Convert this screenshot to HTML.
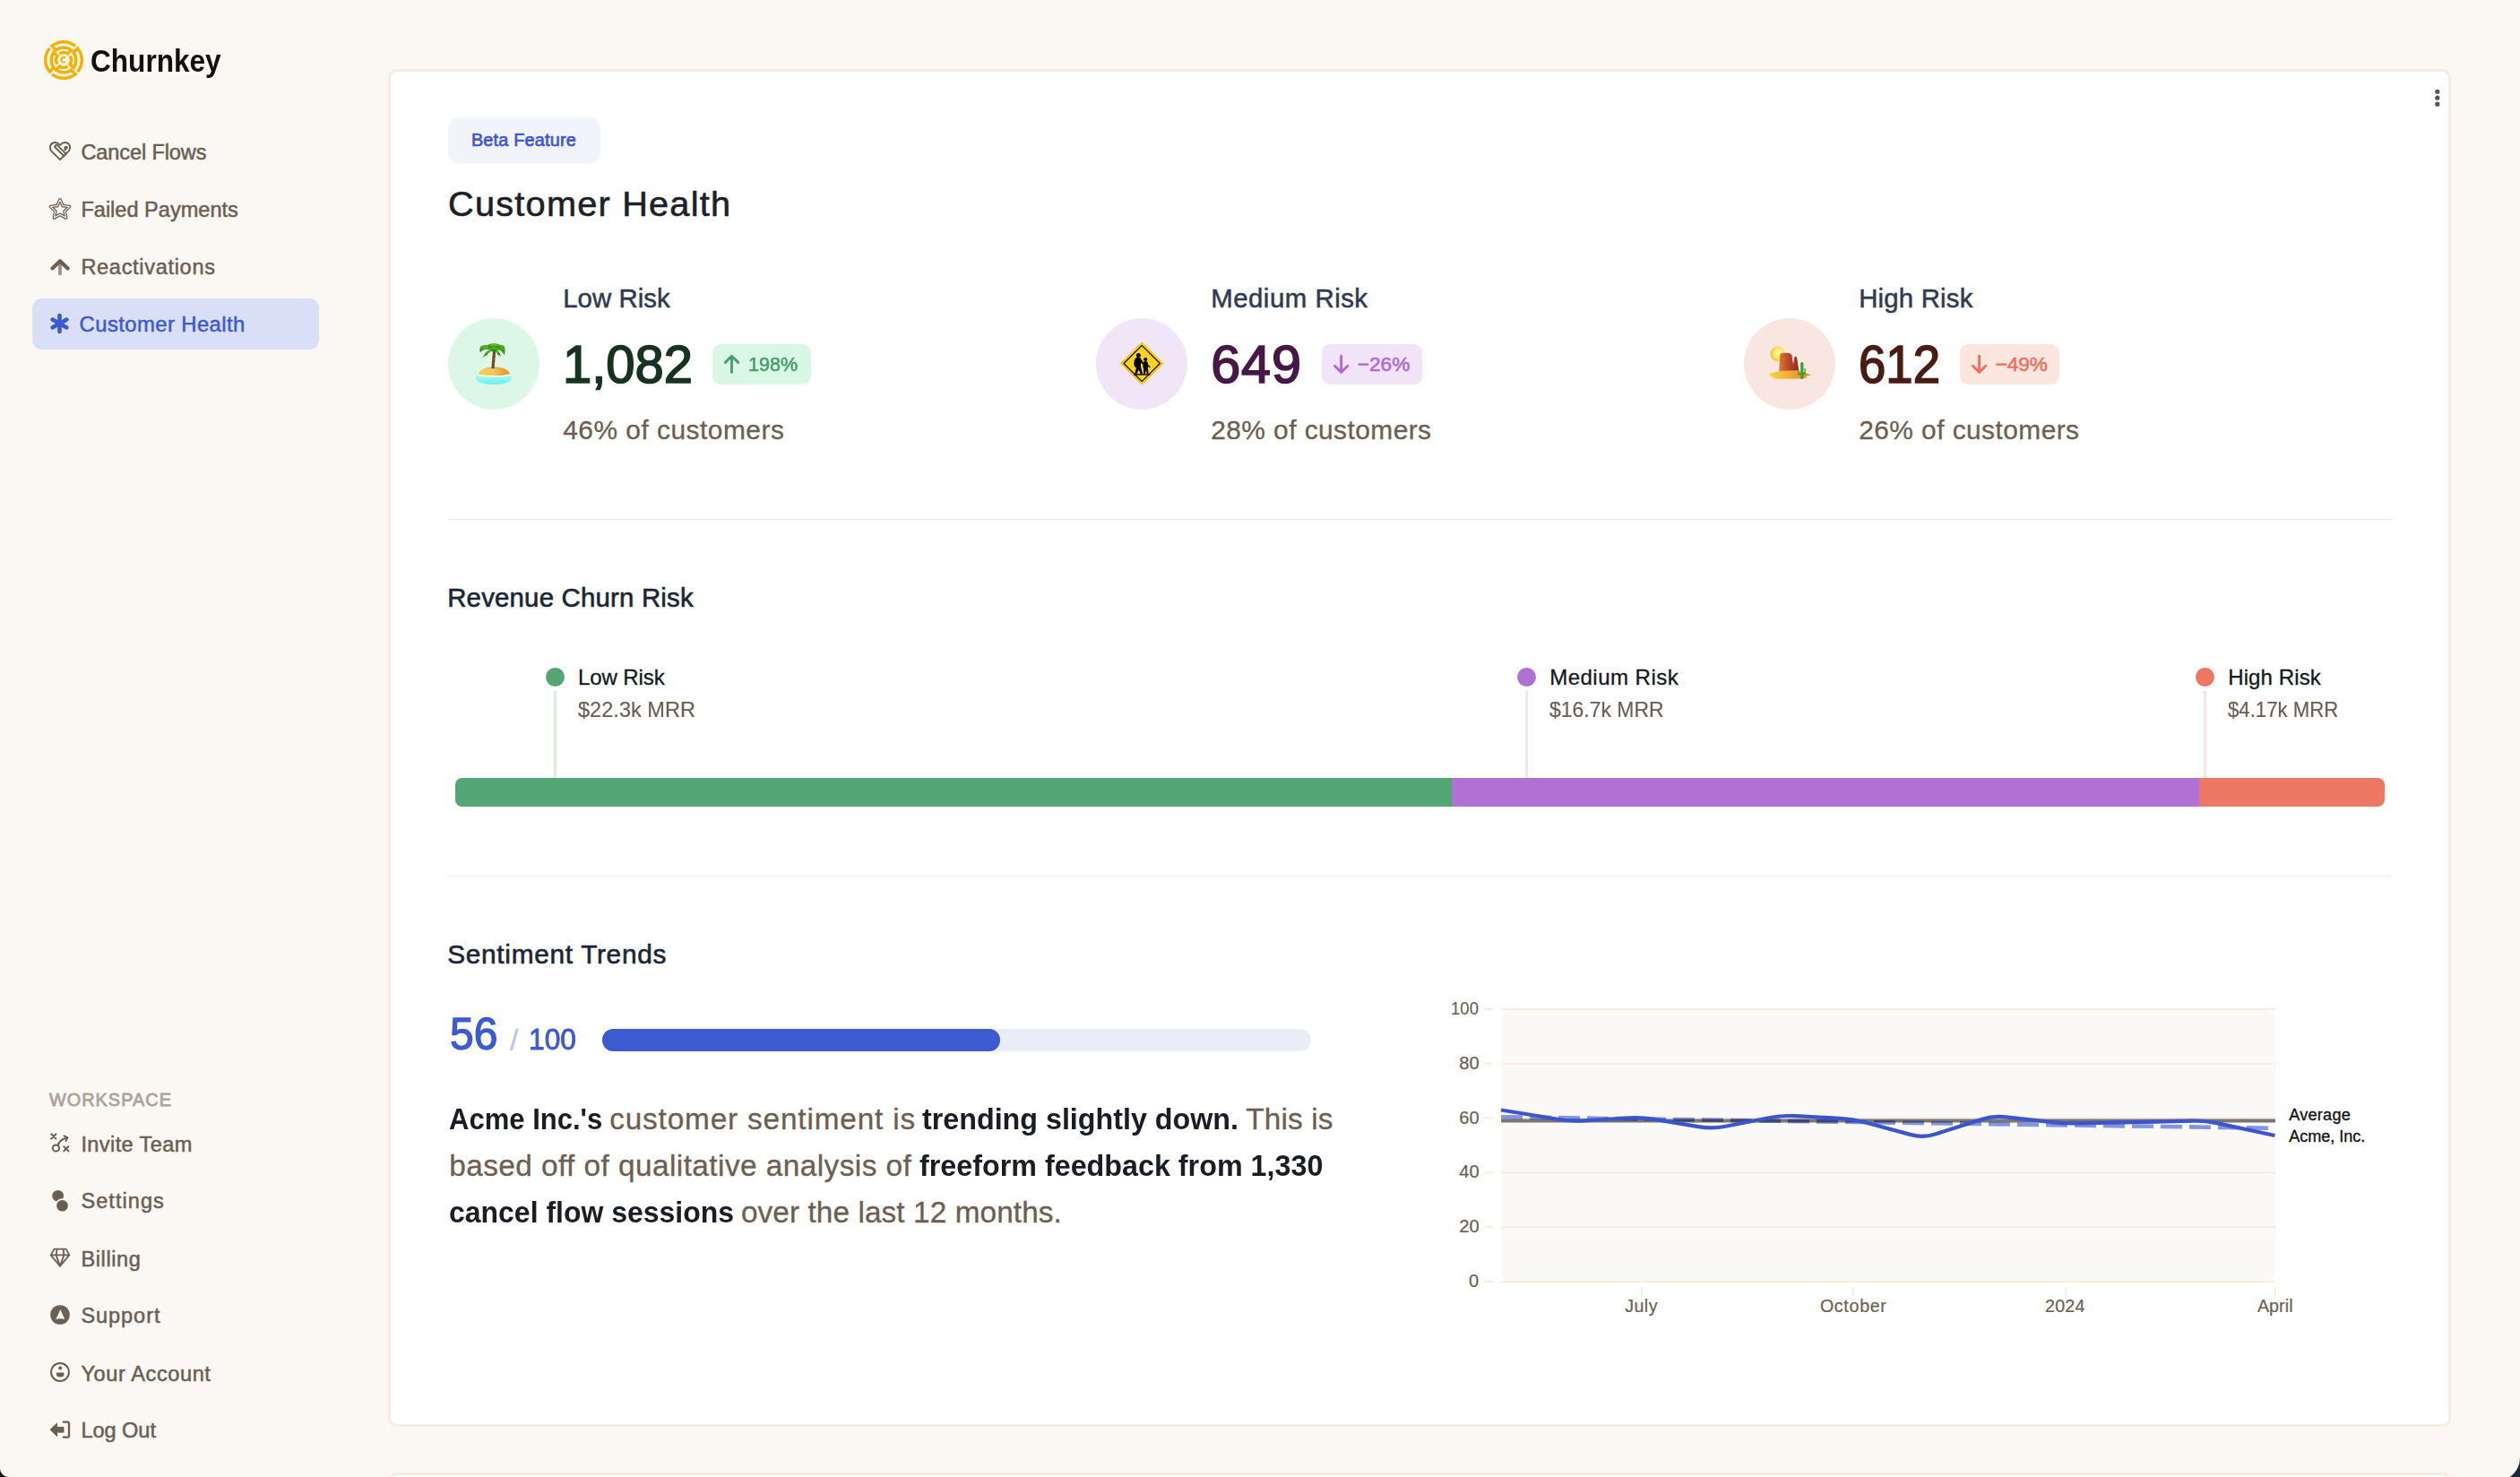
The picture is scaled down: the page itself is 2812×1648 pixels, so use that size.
<!DOCTYPE html>
<html><head><meta charset="utf-8"><title>Customer Health - Churnkey</title>
<style>
html,body{margin:0;padding:0}
body{width:2812px;height:1648px;overflow:hidden;background:#fbf7f2;position:relative;font-family:"Liberation Sans",sans-serif}
.t{position:absolute;white-space:nowrap;line-height:1;font-family:"Liberation Sans",sans-serif}
.a{position:absolute;box-sizing:border-box}
svg{position:absolute;overflow:visible}
</style></head>
<body>
<svg style="left:0;top:1628px" width="40" height="20" viewBox="0 1628 40 20"><path d="M0,1638.6 A9.4,9.4 0 0 0 9.4,1648 L0,1648 Z" fill="#111"/></svg>
<svg style="left:2772px;top:1620px" width="40" height="28" viewBox="2772 1620 40 28"><path d="M2812,1626.4 A26.3,26.3 0 0 1 2785.7,1652.7 L2812,1652.7 Z" fill="#1b2a38"/></svg>
<div class="a" style="left:433px;top:77px;width:2302px;height:1515px;background:#fff;border:3px solid #f7ece1;border-radius:10px"></div>
<div class="a" style="left:433px;top:1643px;width:2302px;height:40px;background:#fff;border:3px solid #f7ece1;border-radius:10px"></div>
<svg style="left:2710px;top:95px" width="20" height="30" viewBox="2710 95 20 30"><circle cx="2719.8" cy="102.3" r="2.6" fill="#55575c"/><circle cx="2719.8" cy="109.2" r="2.6" fill="#55575c"/><circle cx="2719.8" cy="116.2" r="2.6" fill="#55575c"/></svg>
<div class="a" style="left:36px;top:333px;width:320px;height:57px;background:#d9dff6;border-radius:11px"></div>
<div class="a" style="left:500px;top:131px;width:170px;height:51px;background:#f2f4fc;border-radius:12px"></div>
<svg style="left:46px;top:42px" width="50" height="50" viewBox="46 42 50 50"><g fill="none" stroke="#f5b000" stroke-width="3.5" stroke-linejoin="miter" stroke-linecap="butt"><path d="M84.05,51.45 A20.3,20.3 0 0 0 57.95,51.45 L62.63,55.90 A13.9,13.9 0 0 1 79.37,55.90 L75.70,60.04 A8.4,8.4 0 0 0 66.43,59.96"/><path d="M86.55,80.05 A20.3,20.3 0 0 0 86.55,53.95 L82.10,58.63 A13.9,13.9 0 0 1 82.10,75.37 L77.96,71.70 A8.4,8.4 0 0 0 78.04,62.43"/><path d="M57.95,82.55 A20.3,20.3 0 0 0 84.05,82.55 L79.37,78.10 A13.9,13.9 0 0 1 62.63,78.10 L66.30,73.96 A8.4,8.4 0 0 0 75.57,74.04"/><path d="M55.45,53.95 A20.3,20.3 0 0 0 55.45,80.05 L59.90,75.37 A13.9,13.9 0 0 1 59.90,58.63 L64.04,62.30 A8.4,8.4 0 0 0 63.96,71.57"/></g><path d="M72.91,64.79 A2.7,2.7 0 1 0 72.91,68.61" fill="none" stroke="#f5b000" stroke-width="2"/></svg>
<svg style="left:52px;top:154px" width="30" height="30" viewBox="52 154 30 30" fill="none" stroke="#6b5e52" stroke-width="1.9" stroke-linejoin="round">
<path d="M67,178.2 L57.6,168.8 Q55.2,166.2 56.2,162.6 Q57.6,159 61.6,159 Q64.6,159 67,161.8 Q69.4,159 72.4,159 Q76.4,159 77.8,162.6 Q78.8,166.2 76.4,168.8 Z"/>
<path d="M61.2,164 L71.4,174.2 L73.8,171.8 L63.6,161.6 Q61.6,161.4 61.2,164 Z"/>
<path d="M72.4,164.6 Q73.6,163 75,164.6 L72.6,167.4 Z" fill="#6b5e52"/>
</svg>
<svg style="left:52px;top:218px" width="30" height="30" viewBox="52 218 30 30" fill="none" stroke-linejoin="round">
<path d="M67.00,222.80 L70.17,229.63 L77.65,230.54 L72.14,235.67 L73.58,243.06 L67.00,239.40 L60.42,243.06 L61.86,235.67 L56.35,230.54 L63.83,229.63 Z" stroke="#6b5e52" stroke-width="3.6"/>
<path d="M67.00,222.80 L70.17,229.63 L77.65,230.54 L72.14,235.67 L73.58,243.06 L67.00,239.40 L60.42,243.06 L61.86,235.67 L56.35,230.54 L63.83,229.63 Z" stroke="#fbf7f2" stroke-width="1.1"/>
</svg>
<svg style="left:52px;top:282px" width="30" height="30" viewBox="52 282 30 30" fill="none" stroke-linecap="round" stroke-linejoin="round">
<path d="M67,295 L67,305.4" stroke="#9b9088" stroke-width="3.8"/>
<path d="M58.4,299.6 L67,291.2 L75.6,299.6" stroke="#6b5e52" stroke-width="4.2"/>
</svg>
<svg style="left:52px;top:346px" width="30" height="30" viewBox="52 346 30 30" stroke="#3c58cf" stroke-width="4.6" stroke-linecap="round">
<line x1="66.5" y1="352" x2="66.5" y2="370"/><line x1="58.6" y1="356.6" x2="74.4" y2="365.4"/><line x1="58.6" y1="365.4" x2="74.4" y2="356.6"/>
</svg>
<svg style="left:52px;top:1260px" width="30" height="30" viewBox="52 1260 30 30" fill="none" stroke="#6b5e52" stroke-width="2" stroke-linecap="round" stroke-linejoin="round">
<path d="M57.2,1265.4 L62.4,1270.6 M62.4,1265.4 L57.2,1270.6"/>
<path d="M71.2,1279.2 L76.4,1284.4 M76.4,1279.2 L71.2,1284.4"/>
<circle cx="62.4" cy="1281" r="3.6"/>
<path d="M64.6,1277.6 Q66.8,1271.4 75,1269.6"/>
<path d="M71.6,1267.4 L75.4,1269.4 L73.4,1273"/>
</svg>
<svg style="left:52px;top:1324px" width="30" height="30" viewBox="52 1324 30 30">
<defs><mask id="mset"><rect x="52" y="1324" width="30" height="30" fill="#fff"/><circle cx="69.5" cy="1345.3" r="8" fill="#000"/></mask></defs>
<circle cx="64.6" cy="1334.3" r="6.4" fill="#6b5e52" mask="url(#mset)"/>
<circle cx="69.5" cy="1345.3" r="6.3" fill="#6b5e52"/>
</svg>
<svg style="left:52px;top:1388px" width="30" height="30" viewBox="52 1388 30 30" fill="none" stroke="#6b5e52" stroke-width="1.8" stroke-linejoin="round">
<path d="M60.6,1393.6 L73.6,1393.6 L77.4,1400.4 L67,1412.6 L56.6,1400.4 Z"/>
<path d="M56.6,1400.4 L77.4,1400.4 M63.6,1393.6 L62.6,1400.4 L67,1412.6 L71.4,1400.4 L70.6,1393.6"/>
</svg>
<svg style="left:52px;top:1452px" width="30" height="30" viewBox="52 1452 30 30">
<circle cx="67" cy="1467" r="10.8" fill="#6b5e52"/>
<path d="M67.4,1461 L72.2,1472 Q67.2,1470.6 62.4,1472 Z" fill="#fbf7f2"/>
</svg>
<svg style="left:52px;top:1516px" width="30" height="30" viewBox="52 1516 30 30">
<circle cx="67" cy="1531" r="10" fill="none" stroke="#6b5e52" stroke-width="2"/>
<circle cx="67.2" cy="1526.6" r="2" fill="#6b5e52"/>
<path d="M63,1531.4 L71.4,1531.4 Q72.2,1536.6 67.2,1536.6 Q62.2,1536.6 63,1531.4 Z" fill="#6b5e52"/>
</svg>
<svg style="left:52px;top:1580px" width="30" height="30" viewBox="52 1580 30 30">
<path d="M56,1595.2 L63.6,1588 L63.6,1592.4 L71,1592.4 L71,1598.1 L63.6,1598.1 L63.6,1602.4 Z" fill="#6b5e52" stroke="#6b5e52" stroke-width="1" stroke-linejoin="round"/>
<path d="M70.8,1586.7 L75.2,1586.7 Q77,1586.7 77,1588.6 L77,1601.8 Q77,1603.6 75.2,1603.6 L70.8,1603.6" fill="none" stroke="#6b5e52" stroke-width="2.3" stroke-linecap="round"/>
</svg>
<div class="a" style="left:500px;top:355px;width:102px;height:102px;border-radius:51px;background:#dcf6e7"></div>
<div class="a" style="left:1223px;top:355px;width:102px;height:102px;border-radius:51px;background:#f1e5f8"></div>
<div class="a" style="left:1946px;top:355px;width:102px;height:102px;border-radius:51px;background:#fae6e1"></div>
<div class="a" style="left:795px;top:384px;width:110px;height:45px;background:#d9f7e5;border-radius:9px"></div>
<svg style="left:795px;top:384px" width="40" height="45" viewBox="795 384 40 45" fill="none" stroke="#4a9d6c" stroke-width="2.9" stroke-linecap="round" stroke-linejoin="round"><path d="M816.5,415.4 L816.5,397.4 M809.3,404.4 L816.5,397.2 L823.7,404.4"/></svg>
<div class="a" style="left:1475px;top:384px;width:112px;height:45px;background:#f1e4f8;border-radius:9px"></div>
<svg style="left:1475px;top:384px" width="40" height="45" viewBox="1475 384 40 45" fill="none" stroke="#b06ad4" stroke-width="2.9" stroke-linecap="round" stroke-linejoin="round"><path d="M1496.6,397.2 L1496.6,415.2 M1489.3999999999999,408.2 L1496.6,415.4 L1503.8,408.2"/></svg>
<div class="a" style="left:2187px;top:384px;width:111px;height:45px;background:#fbe5df;border-radius:9px"></div>
<svg style="left:2187px;top:384px" width="40" height="45" viewBox="2187 384 40 45" fill="none" stroke="#e8735d" stroke-width="2.9" stroke-linecap="round" stroke-linejoin="round"><path d="M2208.6,397.2 L2208.6,415.2 M2201.4,408.2 L2208.6,415.4 L2215.7999999999997,408.2"/></svg>
<svg style="left:526px;top:378px" width="50" height="56" viewBox="526 378 50 56">
<defs><linearGradient id="gw" x1="0" y1="0" x2="0" y2="1"><stop offset="0" stop-color="#d9fbf3"/><stop offset="0.7" stop-color="#7ef5f0"/><stop offset="1" stop-color="#62eef0"/></linearGradient>
<linearGradient id="gs" x1="0" y1="0" x2="1" y2="0"><stop offset="0" stop-color="#fbd234"/><stop offset="0.45" stop-color="#f3c56a"/><stop offset="0.7" stop-color="#eab23c"/><stop offset="1" stop-color="#e48a2c"/></linearGradient>
<linearGradient id="gl" x1="0" y1="0" x2="0" y2="1"><stop offset="0" stop-color="#5fb82c"/><stop offset="1" stop-color="#2f7d17"/></linearGradient></defs>
<ellipse cx="551" cy="421.8" rx="20.2" ry="7.2" fill="url(#gw)"/>
<path d="M534,418.4 Q535.5,409.6 551,409.2 Q566.5,409.6 569,417.4 Q560,419.6 551,419.2 Q542,419.4 534,418.4 Z" fill="url(#gs)"/>
<path d="M540,412 Q551,407.8 562,412 Q551,410 540,412 Z" fill="#c98a3a" opacity="0.6"/>
<path d="M533.6,418.6 Q542,419.8 551,419.6 Q560,420.4 569.4,417.8" fill="none" stroke="#fff" stroke-width="1.3"/>
<path d="M550,411 Q550.8,401 551.6,391.6" stroke="#6e4420" stroke-width="3.2" fill="none"/>
<path d="M550.4,406 L552,405.2 M550.6,401 L552.2,400.2 M550.8,396 L552.4,395.2" stroke="#b58448" stroke-width="0.9"/>
<g fill="url(#gl)">
<path d="M551,389.6 Q544,382 536,386.4 Q534.6,390 535.8,393.6 Q541,387.4 551,391.4 Z"/>
<path d="M551,389.6 Q558,382 563,386.6 Q564.4,391.6 563,396.4 Q559,388.4 551,391.4 Z"/>
<path d="M550.6,390.2 Q542,388.6 538.8,399.6 Q541.6,396 543.4,396.6 Q545.4,391.6 551,392 Z"/>
<path d="M551.4,390.2 Q558,389.8 558.6,398.2 Q556.6,395.6 555.2,396 Q554.4,392 551,392 Z"/>
<path d="M540.4,386.8 Q551,379.6 561.6,386.8 Q551,384.4 540.4,386.8 Z"/>
<path d="M545,384.2 Q551,382.2 557,384.2 L557.6,388.4 Q551,387 544.4,388.4 Z"/><ellipse cx="551" cy="389.6" rx="4" ry="2.6"/>
</g>
<g fill="#8fd34a" opacity="0.7"><path d="M546,385.6 Q551,383.4 556,385.8 Q551,385.2 546,385.6 Z"/><path d="M538.4,389.6 Q541.6,386.4 546.4,387.8 Q541.6,388 538.4,389.6 Z"/></g>
</svg>
<svg style="left:1248px;top:380px" width="52" height="52" viewBox="1248 380 52 52">
<path d="M1274.2,382.2 L1297.6,405.5 L1274.2,428.8 L1250.8,405.5 Z" fill="#ffd41f" stroke="#f6c400" stroke-width="1.2" stroke-linejoin="round"/>
<path d="M1274.2,385.4 L1294.4,405.5 L1274.2,425.6 L1254,405.5 Z" fill="none" stroke="#111" stroke-width="1.3" stroke-linejoin="round"/>
<g fill="#000">
<circle cx="1270.4" cy="396.4" r="2.5"/>
<path d="M1268,399 Q1271,398 1272.6,399.6 L1275.8,404.6 L1276.6,406.2 L1275.4,406.8 L1273.2,404.6 L1273,409.6 L1275.2,417.6 L1273,417.8 L1270.8,412.4 L1268.2,417.8 L1266,417.6 L1268,410.6 Q1265.2,409.6 1265.4,405 Q1265.6,400.6 1268,399 Z"/>
<circle cx="1278.2" cy="401" r="2.1"/>
<path d="M1276.2,403.4 Q1278.4,402.6 1280.4,403.8 L1281.6,407.6 L1283.8,409.4 L1283.2,410.2 L1280.8,409 L1281,411.4 L1281.6,417.6 L1280,417.6 L1278.8,413 L1277.8,417.6 L1276.2,417.6 L1276,411.6 Q1274.8,409.6 1275.4,406.4 Q1275.6,404.2 1276.2,403.4 Z"/>
<rect x="1265" y="417.2" width="18.4" height="1.4"/>
</g>
</svg>
<svg style="left:1970px;top:380px" width="56" height="50" viewBox="1970 380 56 50">
<defs><radialGradient id="gsun" cx="0.6" cy="0.45" r="0.6"><stop offset="0" stop-color="#fff6a8"/><stop offset="0.7" stop-color="#ffe15a"/><stop offset="1" stop-color="#f7b52c"/></radialGradient>
<linearGradient id="gsand" x1="0" y1="0" x2="1" y2="0"><stop offset="0" stop-color="#ffd63a"/><stop offset="0.6" stop-color="#f0a134"/><stop offset="1" stop-color="#e08a2a"/></linearGradient>
<linearGradient id="grock" x1="0" y1="0" x2="1" y2="0"><stop offset="0" stop-color="#e07a34"/><stop offset="0.5" stop-color="#b8452a"/><stop offset="1" stop-color="#8e2c22"/></linearGradient></defs>
<circle cx="1983.9" cy="394.9" r="8.4" fill="url(#gsun)"/>
<path d="M1985.2,414.4 L1986.2,395.4 Q1987.4,393.6 1990,393.8 L1995.6,394 Q1998.6,394.4 1999.4,396 L2001,406.8 L2002.6,398 Q2004.6,397.2 2005.2,399.4 L2007.2,413.6 Z" fill="url(#grock)"/>
<path d="M1973.6,417.6 Q1982,413.4 1996,413.4 Q2010,413.2 2020.8,418.4 Q2012,419.6 2016.4,421.6 Q2004,423.6 1992,422.4 Q1980,423.4 1978.4,421.2 Q1976,419.6 1973.6,417.6 Z" fill="url(#gsand)"/>
<g fill="#3aa032">
<rect x="2009.2" y="404" width="3.2" height="19" rx="1.6"/>
<path d="M2006.2,412.4 L2007.6,412.4 L2007.6,416.6 L2009.4,416.6 L2009.4,418.4 L2006.2,418.4 Z"/>
<path d="M2014.8,411 L2013.4,411 L2013.4,415.6 L2012,415.6 L2012,417.4 L2014.8,417.4 Z"/>
</g>
</svg>
<div class="a" style="left:500px;top:578.6px;width:2169px;height:1.4px;background:#f5e8dc"></div>
<div class="a" style="left:500px;top:977px;width:2169px;height:1.4px;background:#f5e8dc"></div>
<div class="a" style="left:508px;top:868px;width:2153px;height:32px;border-radius:8px;overflow:hidden;background:#ec7762"><div class="a" style="left:0;top:0;width:1112px;height:32px;background:#53a575"></div><div class="a" style="left:1112px;top:0;width:834px;height:32px;background:#b070d4"></div></div>
<div class="a" style="left:617.7px;top:771px;width:3px;height:97px;background:#dcefe3"></div>
<div class="a" style="left:608.8000000000001px;top:745.3px;width:20.8px;height:20.8px;border-radius:50%;background:#53a575"></div>
<div class="a" style="left:1702.2px;top:771px;width:3px;height:97px;background:#f1e2f7"></div>
<div class="a" style="left:1693.3px;top:745.3px;width:20.8px;height:20.8px;border-radius:50%;background:#b070d4"></div>
<div class="a" style="left:2458.9px;top:771px;width:3px;height:97px;background:#fbe2dc"></div>
<div class="a" style="left:2450.0px;top:745.3px;width:20.8px;height:20.8px;border-radius:50%;background:#ec7762"></div>
<div class="a" style="left:672px;top:1148px;width:791px;height:24.5px;border-radius:12.25px;background:#eaedf6"></div>
<div class="a" style="left:672px;top:1148px;width:444px;height:24.5px;border-radius:12.25px;background:#3d5bd0"></div>
<svg style="left:1600px;top:1100px" width="1000" height="380" viewBox="1600 1100 1000 380"><rect x="1675" y="1127" width="864" height="303" rx="12" fill="#fbf9f7"/><rect x="1656" y="1125" width="10" height="2" fill="#f7ebe2"/><rect x="1675" y="1125" width="864" height="2" fill="#f7ebe2"/><rect x="1656" y="1185.8" width="10" height="2" fill="#f7ebe2"/><rect x="1675" y="1185.8" width="864" height="2" fill="#f7ebe2"/><rect x="1656" y="1246.6" width="10" height="2" fill="#f7ebe2"/><rect x="1675" y="1246.6" width="864" height="2" fill="#f7ebe2"/><rect x="1656" y="1307.4" width="10" height="2" fill="#f7ebe2"/><rect x="1675" y="1307.4" width="864" height="2" fill="#f7ebe2"/><rect x="1656" y="1368.2" width="10" height="2" fill="#f7ebe2"/><rect x="1675" y="1368.2" width="864" height="2" fill="#f7ebe2"/><rect x="1656" y="1429" width="10" height="2" fill="#f7ebe2"/><rect x="1675" y="1429" width="864" height="2" fill="#f7ebe2"/><rect x="1831" y="1436" width="2" height="9.5" fill="#f7ebe2"/><rect x="2067" y="1436" width="2" height="9.5" fill="#f7ebe2"/><rect x="2304" y="1436" width="2" height="9.5" fill="#f7ebe2"/><rect x="2538" y="1436" width="2" height="9.5" fill="#f7ebe2"/><path d="M1675,1246.2 L2539,1258.8" stroke="#8394e0" stroke-width="4.6" stroke-dasharray="24 8" fill="none"/><path d="M1675,1250.6 L2539,1250.6" stroke="#000" stroke-opacity="0.52" stroke-width="4" fill="none"/><path d="M1675.00,1238.50 L1739.68,1248.96 Q1753.50,1251.20 1767.48,1250.38 L1818.02,1247.42 Q1832.00,1246.60 1845.81,1248.89 L1896.69,1257.31 Q1910.50,1259.60 1924.24,1256.94 L1975.26,1247.06 Q1989.00,1244.40 2002.98,1245.15 L2053.52,1247.85 Q2067.50,1248.60 2081.02,1252.25 L2132.48,1266.15 Q2146.00,1269.80 2159.34,1265.55 L2211.16,1249.05 Q2224.50,1244.80 2238.41,1246.36 L2289.09,1252.04 Q2303.00,1253.60 2317.00,1253.35 L2367.50,1252.45 Q2381.50,1252.20 2395.50,1251.84 L2446.00,1250.56 Q2460.00,1250.20 2473.69,1253.13 L2538.50,1267.00" stroke="#3d55cc" stroke-width="4.2" fill="none"/></svg>
<div class="t" style="left:101.40px;top:50.00px;font-size:35.17px;letter-spacing:0.000px;color:#111111;font-weight:700;transform:scaleX(0.8982);transform-origin:0 0;">Churnkey</div>
<div class="t" style="left:90.40px;top:159.00px;font-size:23.55px;letter-spacing:-0.109px;color:#6b5e52;-webkit-text-stroke:0.5px #6b5e52;">Cancel Flows</div>
<div class="t" style="left:90.40px;top:223.00px;font-size:23.55px;letter-spacing:0.007px;color:#6b5e52;-webkit-text-stroke:0.5px #6b5e52;">Failed Payments</div>
<div class="t" style="left:90.40px;top:287.00px;font-size:23.55px;letter-spacing:0.683px;color:#6b5e52;-webkit-text-stroke:0.5px #6b5e52;">Reactivations</div>
<div class="t" style="left:88.60px;top:350.00px;font-size:23.84px;letter-spacing:0.421px;color:#3c58cf;-webkit-text-stroke:0.5px #3c58cf;">Customer Health</div>
<div class="t" style="left:54.90px;top:1218.00px;font-size:19.85px;letter-spacing:1.057px;color:#aca39b;-webkit-text-stroke:0.8px #aca39b;">WORKSPACE</div>
<div class="t" style="left:90.40px;top:1266.00px;font-size:23.55px;letter-spacing:0.400px;color:#6b5e52;-webkit-text-stroke:0.5px #6b5e52;">Invite Team</div>
<div class="t" style="left:90.40px;top:1329.00px;font-size:23.55px;letter-spacing:1.057px;color:#6b5e52;-webkit-text-stroke:0.5px #6b5e52;">Settings</div>
<div class="t" style="left:90.40px;top:1394.00px;font-size:23.55px;letter-spacing:0.617px;color:#6b5e52;-webkit-text-stroke:0.5px #6b5e52;">Billing</div>
<div class="t" style="left:90.40px;top:1457.00px;font-size:23.55px;letter-spacing:0.933px;color:#6b5e52;-webkit-text-stroke:0.5px #6b5e52;">Support</div>
<div class="t" style="left:90.40px;top:1522.00px;font-size:23.55px;letter-spacing:0.600px;color:#6b5e52;-webkit-text-stroke:0.5px #6b5e52;">Your Account</div>
<div class="t" style="left:90.40px;top:1585.00px;font-size:23.55px;letter-spacing:-0.033px;color:#6b5e52;-webkit-text-stroke:0.5px #6b5e52;">Log Out</div>
<div class="t" style="left:525.90px;top:147.00px;font-size:19.83px;letter-spacing:0.204px;color:#3d58cf;-webkit-text-stroke:0.7px #3d58cf;">Beta Feature</div>
<div class="t" style="left:500.10px;top:208.00px;font-size:39.71px;letter-spacing:1.216px;color:#1d2027;-webkit-text-stroke:0.6px #1d2027;">Customer Health</div>
<div class="t" style="left:628.20px;top:318.00px;font-size:29.36px;letter-spacing:0.057px;color:#2f3a4e;-webkit-text-stroke:0.5px #2f3a4e;">Low Risk</div>
<div class="t" style="left:628.20px;top:377.00px;font-size:59.36px;letter-spacing:0.000px;color:#163322;-webkit-text-stroke:1.7px #163322;transform:scaleX(0.9763);transform-origin:0 0;">1,082</div>
<div class="t" style="left:628.20px;top:465.00px;font-size:29.88px;letter-spacing:0.504px;color:#6b5e52;-webkit-text-stroke:0.3px #6b5e52;">46% of customers</div>
<div class="t" style="left:834.90px;top:396.00px;font-size:22.56px;letter-spacing:0.000px;color:#4a9d6c;-webkit-text-stroke:0.6px #4a9d6c;transform:scaleX(0.9576);transform-origin:0 0;">198%</div>
<div class="t" style="left:1351.20px;top:318.00px;font-size:29.36px;letter-spacing:0.520px;color:#2f3a4e;-webkit-text-stroke:0.5px #2f3a4e;">Medium Risk</div>
<div class="t" style="left:1351.20px;top:377.00px;font-size:59.36px;letter-spacing:0.920px;color:#471746;-webkit-text-stroke:1.7px #471746;">649</div>
<div class="t" style="left:1351.20px;top:465.00px;font-size:29.88px;letter-spacing:0.451px;color:#6b5e52;-webkit-text-stroke:0.3px #6b5e52;">28% of customers</div>
<div class="t" style="left:1514.70px;top:396.00px;font-size:22.56px;letter-spacing:0.073px;color:#b06ad4;-webkit-text-stroke:0.6px #b06ad4;">−26%</div>
<div class="t" style="left:2074.20px;top:318.00px;font-size:29.36px;letter-spacing:0.187px;color:#2f3a4e;-webkit-text-stroke:0.5px #2f3a4e;">High Risk</div>
<div class="t" style="left:2074.20px;top:377.00px;font-size:59.36px;letter-spacing:0.000px;color:#4a1b12;-webkit-text-stroke:1.7px #4a1b12;transform:scaleX(0.9187);transform-origin:0 0;">612</div>
<div class="t" style="left:2074.20px;top:465.00px;font-size:29.88px;letter-spacing:0.451px;color:#6b5e52;-webkit-text-stroke:0.3px #6b5e52;">26% of customers</div>
<div class="t" style="left:2226.70px;top:396.00px;font-size:22.56px;letter-spacing:-0.027px;color:#e8735d;-webkit-text-stroke:0.6px #e8735d;">−49%</div>
<div class="t" style="left:499.20px;top:652.00px;font-size:29.39px;letter-spacing:0.201px;color:#1c2535;-webkit-text-stroke:0.6px #1c2535;">Revenue Churn Risk</div>
<div class="t" style="left:499.20px;top:1050.00px;font-size:29.83px;letter-spacing:0.695px;color:#1c2535;-webkit-text-stroke:0.6px #1c2535;">Sentiment Trends</div>
<div class="t" style="left:645.00px;top:744.00px;font-size:24.07px;letter-spacing:-0.120px;color:#14181f;-webkit-text-stroke:0.3px #14181f;">Low Risk</div>
<div class="t" style="left:645.00px;top:780.00px;font-size:24.48px;letter-spacing:0.000px;color:#6b5e52;-webkit-text-stroke:0.2px #6b5e52;transform:scaleX(0.9636);transform-origin:0 0;">$22.3k MRR</div>
<div class="t" style="left:1729.20px;top:744.00px;font-size:24.07px;letter-spacing:0.446px;color:#14181f;-webkit-text-stroke:0.3px #14181f;">Medium Risk</div>
<div class="t" style="left:1729.20px;top:780.00px;font-size:24.48px;letter-spacing:0.000px;color:#6b5e52;-webkit-text-stroke:0.2px #6b5e52;transform:scaleX(0.9379);transform-origin:0 0;">$16.7k MRR</div>
<div class="t" style="left:2486.20px;top:744.00px;font-size:24.07px;letter-spacing:0.082px;color:#14181f;-webkit-text-stroke:0.3px #14181f;">High Risk</div>
<div class="t" style="left:2486.20px;top:780.00px;font-size:24.48px;letter-spacing:0.000px;color:#6b5e52;-webkit-text-stroke:0.2px #6b5e52;transform:scaleX(0.9070);transform-origin:0 0;">$4.17k MRR</div>
<div class="t" style="left:501.90px;top:1129.00px;font-size:50.23px;letter-spacing:0.000px;color:#3d5bd0;-webkit-text-stroke:1.3px #3d5bd0;transform:scaleX(0.9555);transform-origin:0 0;">56</div>
<div class="t" style="left:569.00px;top:1144.00px;font-size:33.37px;letter-spacing:0.000px;color:#b8c3ee;-webkit-text-stroke:0.3px #b8c3ee;">/</div>
<div class="t" style="left:590.20px;top:1144.00px;font-size:32.67px;letter-spacing:0.000px;color:#3d5bd0;-webkit-text-stroke:0.9px #3d5bd0;transform:scaleX(0.9727);transform-origin:0 0;">100</div>
<div class="t" style="left:501.20px;top:1232.00px;font-size:33.72px;letter-spacing:0.000px;color:#1a1d24;font-weight:700;transform:scaleX(0.9204);transform-origin:0 0;">Acme Inc.'s</div>
<div class="t" style="left:680.20px;top:1232.00px;font-size:33.37px;letter-spacing:0.828px;color:#6b5e52;-webkit-text-stroke:0.3px #6b5e52;">customer sentiment is</div>
<div class="t" style="left:1029.20px;top:1232.00px;font-size:33.72px;letter-spacing:0.000px;color:#1a1d24;font-weight:700;transform:scaleX(0.9566);transform-origin:0 0;">trending slightly down.</div>
<div class="t" style="left:1390.20px;top:1232.00px;font-size:33.37px;letter-spacing:0.160px;color:#6b5e52;-webkit-text-stroke:0.3px #6b5e52;">This is</div>
<div class="t" style="left:501.20px;top:1284.00px;font-size:33.37px;letter-spacing:0.442px;color:#6b5e52;-webkit-text-stroke:0.3px #6b5e52;">based off of qualitative analysis of</div>
<div class="t" style="left:1026.00px;top:1284.00px;font-size:33.72px;letter-spacing:0.000px;color:#1a1d24;font-weight:700;transform:scaleX(0.9574);transform-origin:0 0;">freeform feedback from 1,330</div>
<div class="t" style="left:501.20px;top:1336.00px;font-size:33.72px;letter-spacing:0.000px;color:#1a1d24;font-weight:700;transform:scaleX(0.9481);transform-origin:0 0;">cancel flow sessions</div>
<div class="t" style="left:826.90px;top:1336.00px;font-size:33.37px;letter-spacing:0.085px;color:#6b5e52;-webkit-text-stroke:0.3px #6b5e52;">over the last 12 months.</div>
<div class="t" style="left:1618.90px;top:1115.00px;font-size:20.12px;letter-spacing:0.000px;color:#6b5e52;-webkit-text-stroke:0.2px #6b5e52;transform:scaleX(0.9221);transform-origin:0 0;">100</div>
<div class="t" style="left:1628.20px;top:1176.00px;font-size:20.12px;letter-spacing:0.040px;color:#6b5e52;-webkit-text-stroke:0.2px #6b5e52;">80</div>
<div class="t" style="left:1628.20px;top:1237.00px;font-size:20.12px;letter-spacing:0.040px;color:#6b5e52;-webkit-text-stroke:0.2px #6b5e52;">60</div>
<div class="t" style="left:1628.20px;top:1297.00px;font-size:20.12px;letter-spacing:0.040px;color:#6b5e52;-webkit-text-stroke:0.2px #6b5e52;">40</div>
<div class="t" style="left:1628.20px;top:1358.00px;font-size:20.12px;letter-spacing:0.040px;color:#6b5e52;-webkit-text-stroke:0.2px #6b5e52;">20</div>
<div class="t" style="left:1638.90px;top:1419.00px;font-size:20.12px;letter-spacing:0.000px;color:#6b5e52;-webkit-text-stroke:0.2px #6b5e52;">0</div>
<div class="t" style="left:1813.20px;top:1448.00px;font-size:19.68px;letter-spacing:0.447px;color:#6b5e52;-webkit-text-stroke:0.2px #6b5e52;">July</div>
<div class="t" style="left:2030.90px;top:1448.00px;font-size:19.68px;letter-spacing:0.673px;color:#6b5e52;-webkit-text-stroke:0.2px #6b5e52;">October</div>
<div class="t" style="left:2282.00px;top:1448.00px;font-size:19.68px;letter-spacing:0.213px;color:#6b5e52;-webkit-text-stroke:0.2px #6b5e52;">2024</div>
<div class="t" style="left:2518.90px;top:1448.00px;font-size:19.68px;letter-spacing:0.085px;color:#6b5e52;-webkit-text-stroke:0.2px #6b5e52;">April</div>
<div class="t" style="left:2554.20px;top:1235.00px;font-size:18.11px;letter-spacing:0.243px;color:#111111;-webkit-text-stroke:0.3px #111111;">Average</div>
<div class="t" style="left:2554.20px;top:1259.00px;font-size:18.11px;letter-spacing:-0.049px;color:#111111;-webkit-text-stroke:0.3px #111111;">Acme, Inc.</div>
<script>(function(){var w=window.innerWidth;if(w&&Math.abs(w-2812)>4){var s=w/2812;document.body.style.transformOrigin='0 0';document.body.style.transform='scale('+s+')';}})();</script>
</body></html>
